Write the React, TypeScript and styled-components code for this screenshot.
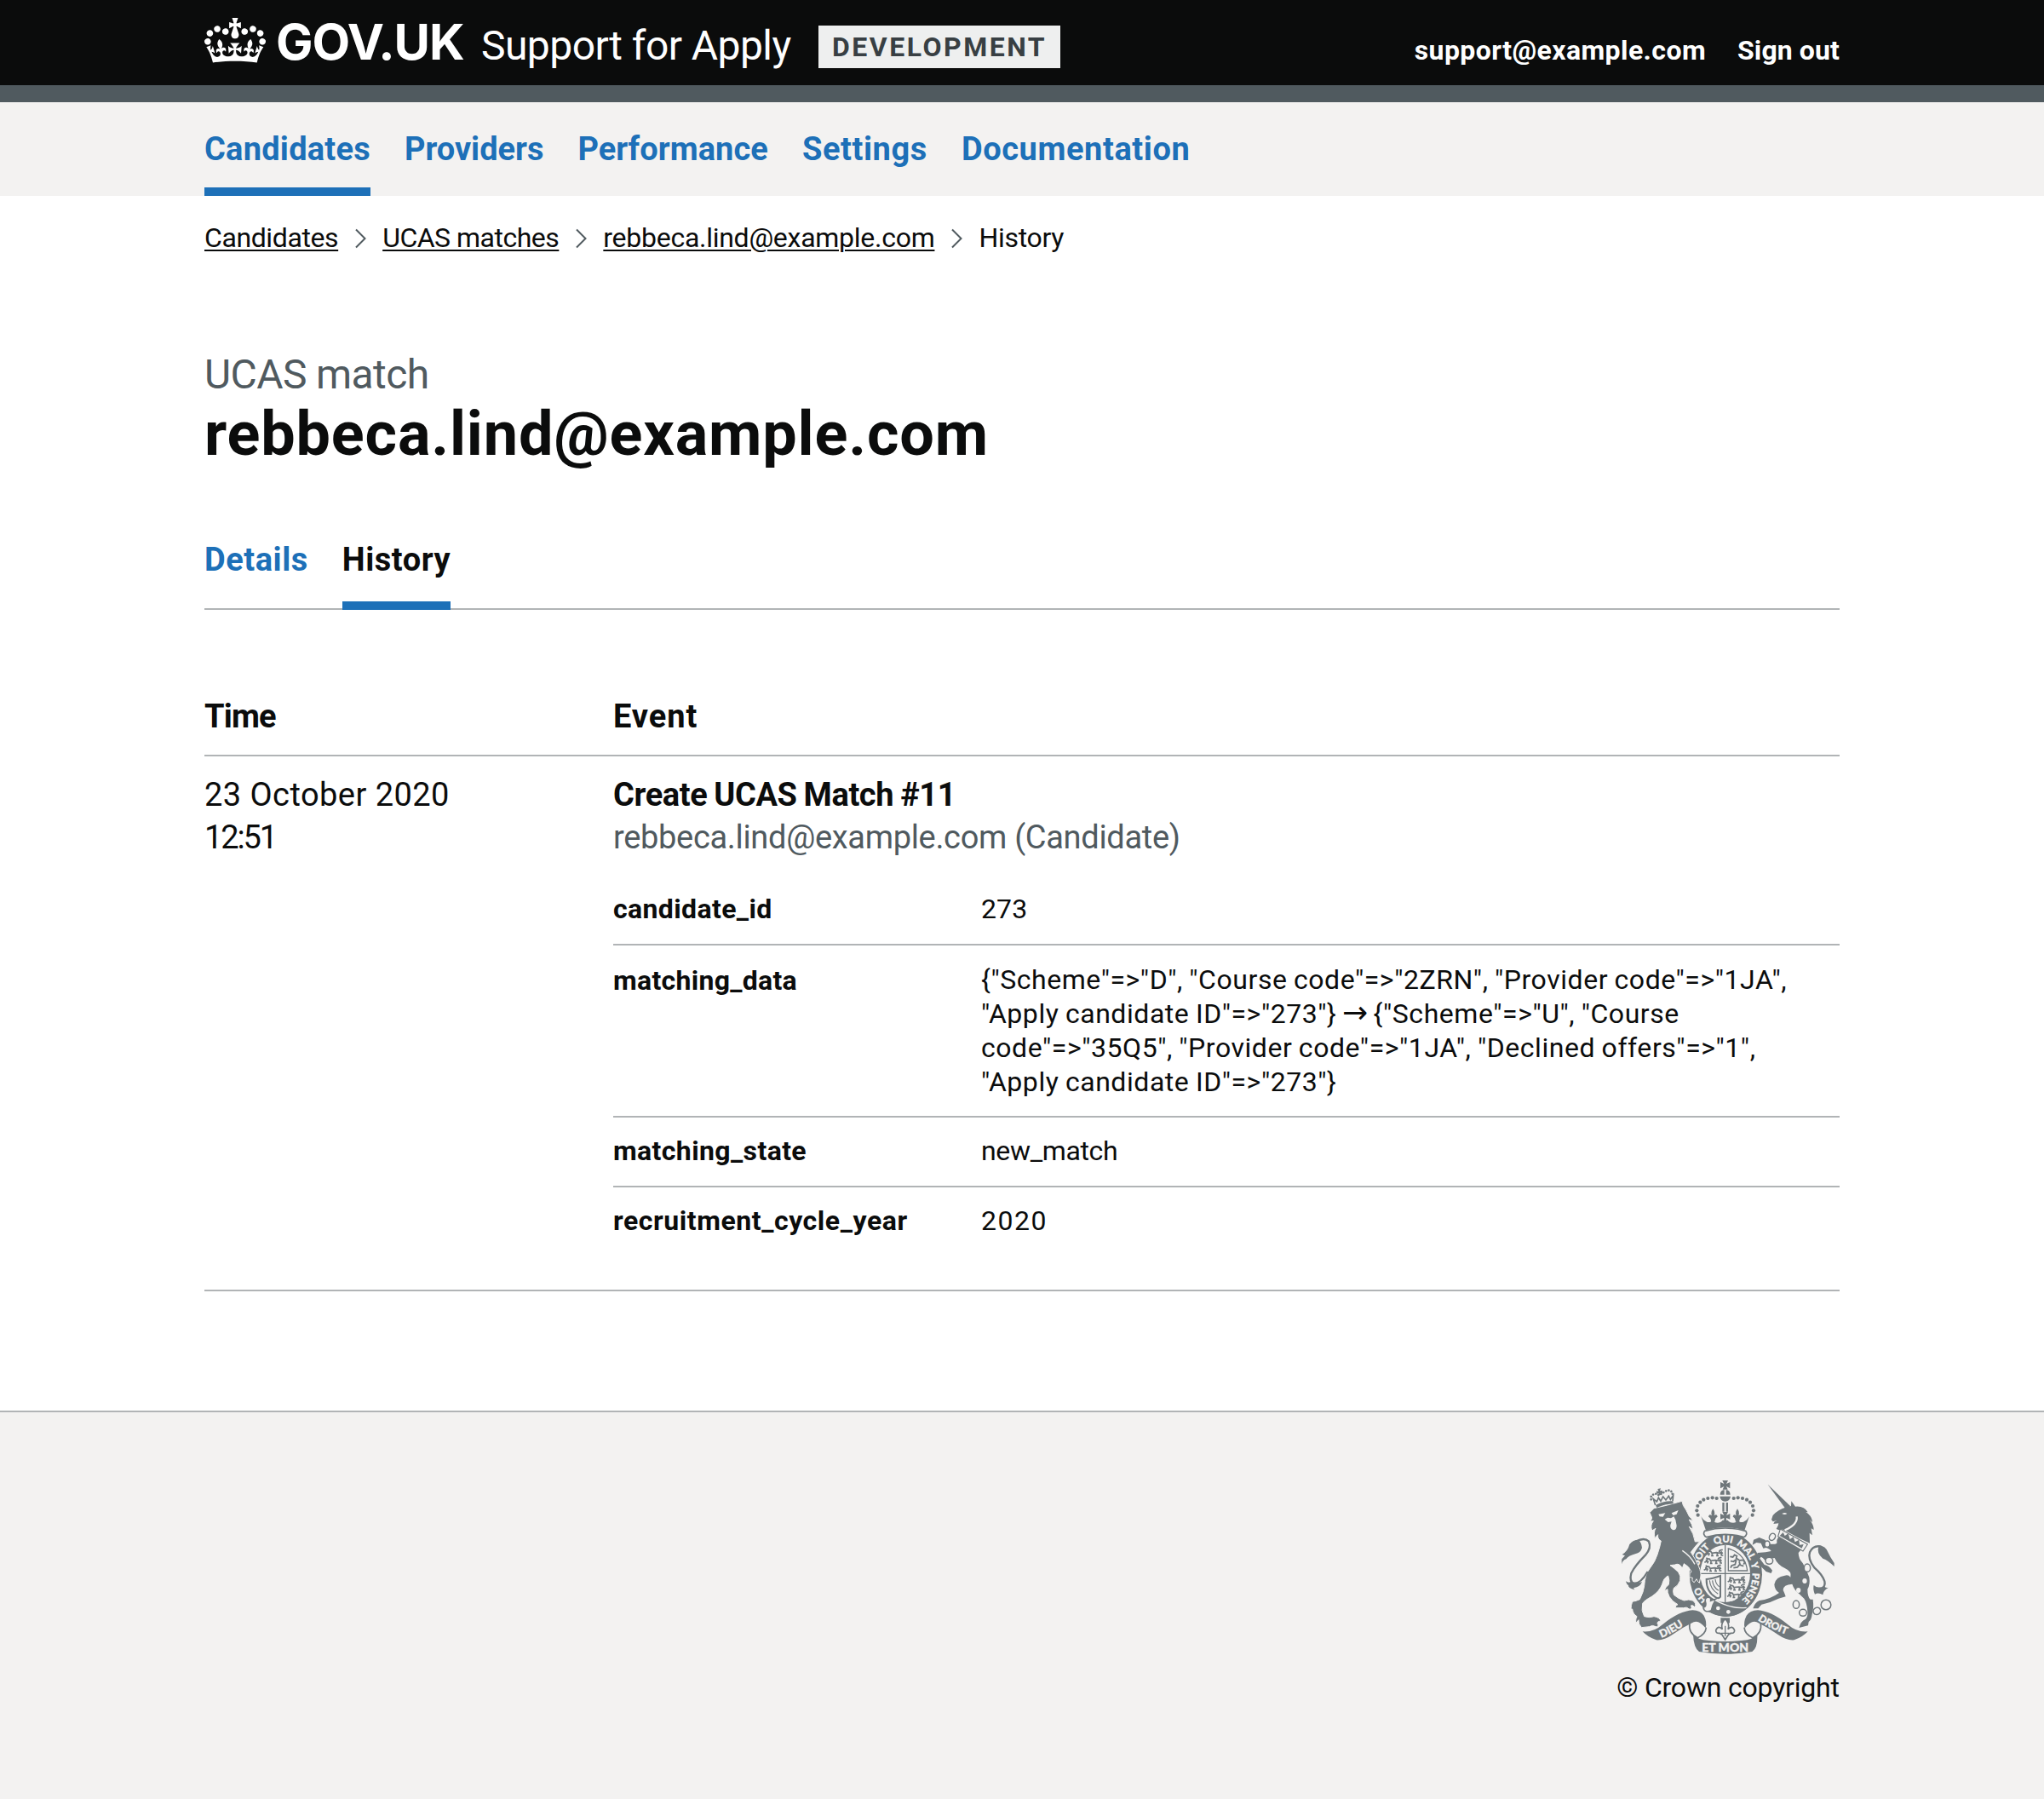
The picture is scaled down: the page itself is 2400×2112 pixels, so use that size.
import React from 'react';
import styled, { createGlobalStyle } from 'styled-components';

const ink = '#0b0c0c';
const secondary = '#505a5f';
const brand = '#1d70b8';
const rule = '#b1b4b6';
const pale = '#f3f2f1';
const crest = '#6f777b';

const GlobalStyle = createGlobalStyle`
  *, *::before, *::after { box-sizing: border-box; }
  body {
    margin: 0;
    background: #fff;
    color: ${ink};
    font-family: Roboto, "Liberation Sans", Arial, sans-serif;
    font-size: 38px;
    line-height: 50px;
  }
`;

interface Tracked {
  $track?: number;
}

const Page = styled.div`
  min-height: 2112px;
  display: flex;
  flex-direction: column;
`;

const Container = styled.div`
  width: 1920px;
  margin: 0 auto;
`;

/* Header */

const Header = styled.header`
  height: 120px;
  background: ${ink};
  border-bottom: 20px solid ${secondary};
`;

const HeaderRow = styled(Container)`
  display: flex;
  align-items: flex-start;
  white-space: nowrap;
`;

const CrownIcon = styled.svg`
  width: 72px;
  height: 53px;
  margin-top: 21px;
  flex: none;
  fill: #fff;
`;

const Logotype = styled.span`
  width: 241px;
  margin-top: 19px;
  padding-left: 12px;
  color: #fff;
  font-family: Inter, sans-serif;
  font-size: 58px;
  font-weight: 700;
  line-height: 60px;
  letter-spacing: -1.1px;
`;

const ServiceName = styled.span`
  width: 408px;
  margin-top: 24px;
  padding-left: 12px;
  color: #fff;
  font-size: 48px;
  line-height: 60px;
  letter-spacing: -0.56px;
`;

const EnvironmentTag = styled.strong`
  margin-top: 30px;
  padding: 0 16px;
  background: #eeefef;
  color: #383f43;
  font-size: 32px;
  font-weight: 700;
  line-height: 50px;
  letter-spacing: 2.5px;
`;

const AccountNav = styled.nav`
  display: flex;
  gap: 37px;
  margin: 39px 0 0 auto;
`;

const AccountLink = styled.a<Tracked>`
  color: #fff;
  font-size: 32px;
  font-weight: 700;
  line-height: 40px;
  letter-spacing: ${(p) => p.$track ?? 0}px;
`;

/* Navigation */

const PrimaryNav = styled.nav`
  height: 110px;
  background: ${pale};
`;

const NavList = styled(Container)`
  display: flex;
  gap: 40px;
`;

const NavLink = styled.a<Tracked & { $current?: boolean }>`
  height: 110px;
  padding-top: 30px;
  border-bottom: 10px solid ${(p) => (p.$current ? brand : 'transparent')};
  color: ${brand};
  font-weight: 700;
  letter-spacing: ${(p) => p.$track ?? 0}px;
`;

const Breadcrumbs = styled.nav`
  display: flex;
  align-items: flex-start;
  margin-top: 29px;
  font-size: 32px;
  line-height: 40px;
`;

const Crumb = styled.a<Tracked & { $link?: boolean }>`
  letter-spacing: ${(p) => p.$track ?? 0}px;
  text-decoration: ${(p) => (p.$link ? 'underline' : 'none')};
  text-decoration-thickness: 2px;
  text-underline-offset: 3px;
`;

const ChevronIcon = styled.svg`
  width: 13px;
  height: 24px;
  margin: 9px 19px 0 20px;
  fill: none;
  stroke: ${secondary};
  stroke-width: 2;
`;

/* Page heading */

const Heading = styled.h1`
  margin: 111px 0 0;
  font-size: 72px;
  font-weight: 700;
  line-height: 80px;
  letter-spacing: 0.82px;
`;

const Caption = styled.span`
  display: block;
  color: ${secondary};
  font-size: 48px;
  font-weight: 400;
  line-height: 60px;
  letter-spacing: -0.6px;
`;

const Tabs = styled.nav`
  display: flex;
  gap: 40px;
  height: 84px;
  margin-top: 82px;
  box-shadow: inset 0 -2px 0 ${rule};
`;

const Tab = styled.a<{ $current?: boolean }>`
  border-bottom: 10px solid ${(p) => (p.$current ? brand : 'transparent')};
  color: ${(p) => (p.$current ? ink : brand)};
  font-weight: 700;
  letter-spacing: 0.54px;
`;

/* Audit table */

const AuditTable = styled.section`
  margin-top: 100px;
`;

const AuditRow = styled.div<{ $head?: boolean }>`
  display: grid;
  grid-template-columns: 480px 1440px;
  padding: ${(p) => (p.$head ? '0 0 20px' : '20px 0 40px')};
  border-bottom: 2px solid ${rule};
`;

const HeadCell = styled.div<Tracked>`
  font-weight: 700;
  letter-spacing: ${(p) => p.$track ?? 0}px;
`;

const TimeLine = styled.div<Tracked>`
  letter-spacing: ${(p) => p.$track ?? 0}px;
`;

const EventTitle = styled.div`
  font-weight: 700;
  letter-spacing: -0.4px;
  word-spacing: -1px;
`;

const EventActor = styled.div`
  color: ${secondary};
  letter-spacing: -0.32px;
`;

const ChangeList = styled.dl`
  margin: 20px 0 0;
  font-size: 32px;
  line-height: 40px;
`;

const Change = styled.div`
  display: grid;
  grid-template-columns: 432px 1008px;
  &:not(:last-child) { border-bottom: 2px solid ${rule}; }
`;

const ChangeKey = styled.dt<Tracked & { $tall?: boolean }>`
  padding-top: ${(p) => (p.$tall ? 21 : 19)}px;
  font-weight: 700;
  letter-spacing: ${(p) => p.$track ?? 0}px;
`;

const ChangeValue = styled.dd<Tracked & { $tall?: boolean }>`
  margin: 0;
  padding: ${(p) => (p.$tall ? '20px 20px 20px 0' : '19px 20px 21px 0')};
  letter-spacing: ${(p) => p.$track ?? 0}px;
  word-spacing: ${(p) => (p.$tall ? -1 : 0)}px;
`;

const Arrow = styled.span`
  display: inline-block;
  font-family: "DejaVu Sans", sans-serif;
  font-size: 36px;
  font-weight: 400;
  line-height: 30px;
  letter-spacing: 0;
  margin: 0 -1px;
`;

/* Footer */

const Footer = styled.footer`
  flex: 1;
  margin-top: 140px;
  padding-top: 80px;
  background: ${pale};
  border-top: 2px solid ${rule};
`;

const FooterInner = styled(Container)`
  display: flex;
  justify-content: flex-end;
`;

const Copyright = styled.a`
  display: flex;
  flex-direction: column;
  align-items: center;
  width: 262px;
  font-size: 32px;
  line-height: 40px;
  letter-spacing: -0.2px;
  white-space: nowrap;
`;

const ArmsIcon = styled.svg`
  width: 250px;
  height: 204px;
  margin-bottom: 19px;
`;

const Motto = styled.text<{ $size: number }>`
  fill: ${pale};
  stroke: ${pale};
  stroke-width: 1;
  font-family: Lato, sans-serif;
  font-size: ${(p) => p.$size}px;
  font-weight: 900;
  letter-spacing: 0;
`;

const Crown = () => (
  <CrownIcon viewBox="0 0 132 97" preserveAspectRatio="none" aria-hidden="true">
    <path d="M25 30.2c3.5 1.5 7.7-.2 9.1-3.7 1.5-3.6-.2-7.8-3.9-9.2-3.6-1.4-7.6.3-9.1 3.9-1.4 3.5.3 7.5 3.9 9zM9 39.5c3.6 1.5 7.8-.2 9.2-3.7 1.5-3.6-.2-7.8-3.9-9.1-3.6-1.5-7.6.2-9.1 3.8-1.4 3.5.3 7.5 3.8 9zM4.4 57.2c3.5 1.5 7.7-.2 9.1-3.8 1.5-3.6-.2-7.7-3.9-9.1-3.5-1.5-7.6.3-9.1 3.8-1.4 3.5.3 7.6 3.9 9.1zm38.3-21.4c3.5 1.5 7.7-.2 9.1-3.8 1.5-3.6-.2-7.7-3.9-9.1-3.6-1.5-7.6.3-9.1 3.8-1.3 3.6.4 7.7 3.9 9.1zm64.4-5.6c-3.6 1.5-7.8-.2-9.1-3.7-1.5-3.6.2-7.8 3.8-9.2 3.6-1.4 7.7.3 9.2 3.9 1.3 3.5-.4 7.5-3.9 9zm15.9 9.3c-3.6 1.5-7.7-.2-9.1-3.7-1.5-3.6.2-7.8 3.7-9.1 3.6-1.5 7.7.2 9.2 3.8 1.5 3.5-.3 7.5-3.8 9zm4.7 17.7c-3.6 1.5-7.8-.2-9.2-3.8-1.5-3.6.2-7.7 3.9-9.1 3.6-1.5 7.7.3 9.2 3.8 1.3 3.5-.4 7.6-3.9 9.1zM89.3 35.8c-3.6 1.5-7.8-.2-9.2-3.8-1.4-3.6.2-7.7 3.9-9.1 3.6-1.5 7.7.3 9.2 3.8 1.4 3.6-.3 7.7-3.9 9.1zM69.7 17.7l8.9 4.7V9.3l-8.9 2.8c-.2-.3-.5-.6-.9-.9L72.4 0H59.6l3.5 11.2c-.3.3-.6.5-.9.9l-8.8-2.8v13.1l8.8-4.7c.3.3.6.7.9.9l-5 15.4v.1c-.2.8-.4 1.6-.4 2.4 0 4.1 3.1 7.5 7 8.1h.2c.3 0 .7.1 1 .1.4 0 .7 0 1-.1h.2c4-.6 7.1-4.1 7.1-8.1 0-.8-.1-1.7-.4-2.4V34l-5.1-15.4c.4-.2.7-.6 1-.9zM66 92.8c16.9 0 32.8 1.1 47.1 3.2 4-16.9 8.9-26.7 14-33.5l-9.6-3.4c1 4.9 1.1 7.2 0 10.2-1.5-1.4-3-4.3-4.2-8.7L108.6 76c2.8-2 5-3.2 7.5-3.3-4.4 9.4-10 11.9-13.6 11.2-4.3-.8-6.3-4.6-5.6-7.9 1-4.7 5.7-5.9 8-.5 4.3-8.7-3-11.4-7.6-8.8 7.1-7.2 7.9-13.5 2.1-21.1-8 6.1-8.1 12.3-4.5 20.8-4.7-5.4-12.1-2.5-9.5 6.2 3.4-5.2 7.9-2 7.2 3.1-.6 4.3-6.4 7.8-13.5 7.2-10.3-.9-10.9-8-11.2-13.8 2.5-.5 7.1 1.8 11 7.3L80.2 60c-4.1 4.4-8 5.3-12.3 5.4 1.4-4.4 8-11.6 8-11.6H55.5s6.4 7.2 7.9 11.6c-4.2-.1-8-1-12.3-5.4l1.4 16.4c3.9-5.5 8.5-7.7 10.9-7.3-.3 5.8-.9 12.8-11.1 13.8-7.2.6-12.9-2.9-13.5-7.2-.7-5 3.8-8.3 7.1-3.1 2.7-8.7-4.6-11.6-9.4-6.2 3.7-8.5 3.6-14.7-4.6-20.8-5.8 7.6-5 13.9 2.2 21.1-4.7-2.6-11.9.1-7.7 8.8 2.3-5.5 7.1-4.2 8.1.5.7 3.3-1.3 7.1-5.7 7.9-3.5.7-9-1.8-13.5-11.2 2.5.1 4.7 1.3 7.5 3.3l-4.7-15.4c-1.2 4.4-2.7 7.2-4.3 8.7-1.1-3-.9-5.3 0-10.2l-9.5 3.4c5 6.9 9.9 16.7 14 33.5 14.8-2.1 30.8-3.2 47.7-3.2z" />
  </CrownIcon>
);

const Chevron = () => (
  <ChevronIcon viewBox="0 0 13 24" aria-hidden="true">
    <path d="M1 1.5 11.5 12 1 22.5" />
  </ChevronIcon>
);

const pearls: [number, number][] = [
  [341, 416], [337, 400], [340, 384], [349, 371], [361, 362], [376, 357], [392, 355], [407, 357],
];

const PassantLion = ({ x, y }: { x: number; y: number }) => (
  <path
    transform={`translate(${x} ${y})`}
    fill="none"
    stroke={crest}
    strokeWidth="5"
    d="M0 20l8-4 2-10 8 2 4 6 16-2 10 2 8-4 4 6M6 4l8 4M4 12l6 0M14 14l-4 9M24 14l-2 9 6 0M42 12l-2 11 6 0M54 12l2 10 6 0M48 10c0-8 8-6 12-8"
  />
);

const garterWords = [
  { word: 'HO', offset: 94 },
  { word: 'SOIT', offset: 233 },
  { word: 'QUI', offset: 322 },
  { word: 'MAL', offset: 405 },
  { word: 'Y', offset: 463 },
  { word: 'PENSE', offset: 541 },
];

const Arms = () => (
  <ArmsIcon viewBox="72 294 750 612" aria-hidden="true">
    <defs>
      <path id="garter" d="M437 738A96 113 0 0 1 341 625A96 113 0 0 1 437 512A96 113 0 0 1 533 625A96 113 0 0 1 437 738" />
      <path id="dieu" d="M212 849Q268 826 326 780" />
      <path id="droit" d="M552 786Q606 824 690 849" />
    </defs>

    {/* Garter and shield */}
    <ellipse cx="439" cy="625" rx="128" ry="148" fill={crest} />
    <ellipse cx="437" cy="622" rx="88" ry="101" fill={pale} />
    {garterWords.map((g) => (
      <Motto key={g.word} $size={34} textAnchor="middle">
        <textPath href="#garter" startOffset={g.offset}>{g.word}</textPath>
      </Motto>
    ))}
    <path d="M437 521V723M349 622H525" stroke={crest} strokeWidth="4" />
    <PassantLion x={368} y={536} />
    <PassantLion x={364} y={563} />
    <PassantLion x={362} y={590} />
    <PassantLion x={446} y={631} />
    <PassantLion x={446} y={657} />
    <PassantLion x={444} y={683} />
    <path d="M448 534Q508 552 515 612H448Z" fill="none" stroke={crest} strokeWidth="4" />
    <path
      d="M454 562l10 2 6-8 8 4-2 8 12 8 12-2M476 572l-10 8-10-2M486 580l4 12 12 4M476 574l-4 16-12 4-4 8M488 590l-8 10-14 2M500 574l6 8-4 8"
      fill="none" stroke={crest} strokeWidth="5.5"
    />
    <path d="M371 642Q392 640 420 630L420 704Q414 712 404 706Q370 686 371 642Z" fill="none" stroke={crest} strokeWidth="6" />
    <path d="M382 646Q384 676 412 694M392 646Q394 670 414 682M402 642Q404 660 416 668" fill="none" stroke={crest} strokeWidth="3.5" />

    {/* Buckle and strap */}
    <path d="M366 712Q382 700 398 716L510 748Q470 778 430 773Q390 766 364 748Z" fill={crest} />
    <path d="M372 706Q388 702 386 718L404 712Q392 732 388 752Q364 762 360 742Q372 738 368 724Q364 712 372 706Z" fill={pale} stroke={crest} strokeWidth="5" />
    <path d="M402 716Q460 748 512 742" fill="none" stroke={pale} strokeWidth="4" />
    <circle cx="412" cy="744" r="7" fill={pale} />
    <circle cx="448" cy="757" r="7" fill={pale} />
    <path d="M421 778H453V796H421Z" fill={crest} />
    <path
      d="M437 782Q454 798 447 818Q462 802 470 822Q470 834 456 832Q452 836 449 836Q445 842 437 855Q429 842 425 836Q422 836 418 832Q404 834 404 822Q412 802 427 818Q420 798 437 782Z"
      fill={pale} stroke={crest} strokeWidth="5"
    />
    <path d="M437 806V842M422 832H452" stroke={crest} strokeWidth="4" />

    {/* Imperial crown */}
    <path d="M365 472Q437 452 509 472Q518 484 503 494Q437 474 371 494Q356 484 365 472Z" fill={pale} stroke={crest} strokeWidth="5" />
    <path d="M352 420C366 444 384 446 392 434C400 446 420 446 428 434L446 434C454 446 476 446 482 434C490 446 508 444 522 420L505 470Q437 450 369 470Z" fill={crest} />
    {[394, 480].map((x) => (
      <path key={x} transform={`translate(${x} 0)`} fill={crest} d="M0 394Q9 406 4 418Q14 410 16 422Q8 424 6 440H-6Q-8 424-16 422Q-14 410-4 418Q-9 406 0 394Z" />
    ))}
    <path d="M427 405H447L441 417L454 411V431L441 426V440H433V426L420 431V411L433 417Z" fill={crest} />
    <path d="M427 372h7v32h-7zM440 372h7v32h-7z" fill={crest} />
    <path d="M419 344Q420 328 434 327V344ZM455 344Q454 328 440 327V344ZM418 350H456Q454 367 437 368Q420 367 418 350Z" fill={crest} />
    <path d="M427 294H447L441 306L454 300V322L441 315L446 326H428L433 315L420 322V300L433 306Z" fill={crest} />
    {pearls.map(([x, y]) => (
      <g key={`${x}-${y}`} fill={crest}>
        <circle cx={x} cy={y} r="6.3" />
        <circle cx={874 - x} cy={y} r="6.3" />
      </g>
    ))}

    {/* Lion */}
    <g transform="translate(60 285)">
      <path
        fill={crest}
        stroke={pale}
        strokeWidth="3"
        d="M111 122L126 107Q170 98 225 82L229 97Q240 112 250 135Q258 142 263 152L250 147Q262 165 264 182L250 172Q266 195 271 225L287 224Q270 242 256 262Q272 285 283 310Q294 335 290 350L286 370Q278 364 276 356L268 368Q258 364 262 352L251 350Q250 335 258 330Q250 312 232 302L226 318Q215 298 200 306L183 308Q198 318 212 332Q222 345 218 362Q212 380 196 388Q192 398 196 412Q212 426 232 432Q250 426 262 432Q276 440 271 456Q262 446 256 450Q262 460 252 463Q240 452 230 458L202 458Q200 450 210 446Q190 436 180 418Q172 402 174 392L162 398Q166 384 178 376Q182 360 176 345Q160 352 155 375Q145 400 118 418Q92 432 86 442Q80 468 92 488Q110 494 126 488Q146 490 151 506Q140 502 138 512Q146 520 136 525Q120 516 110 524L82 527Q70 514 72 500L61 512Q62 494 66 488Q52 480 50 462L45 462Q46 430 60 434L76 428Q90 400 92 380Q94 340 112 318Q130 296 138 270Q148 240 151 222Q137 215 140 200L129 212Q124 190 132 178L119 186Q112 165 124 152L113 153Q121 142 118 138Z"
      />
      <path d="M142 128L166 124L158 137L146 136ZM188 124L212 114L206 128L194 132ZM164 146L174 140L186 142L196 136L202 148L206 168Q206 184 194 184Q182 180 184 166L188 154L176 156Z" fill={pale} />
      <path d="M226 256Q256 276 270 304" fill="none" stroke={pale} strokeWidth="4" />
      <path d="M62 224Q92 208 108 224Q118 246 96 272Q60 308 46 336Q38 366 56 372Q80 372 104 330" fill="none" stroke={crest} strokeWidth="7" />
      <path d="M12 304L13 286L24 274L14 270Q34 258 40 234Q52 218 72 218Q82 228 84 246Q80 264 60 268Q36 274 28 286Q16 290 12 304ZM27 364Q38 372 48 364Q62 374 84 366Q78 384 54 388L58 394Q34 388 36 378Q30 376 27 364Z" fill={crest} />
      <path d="M132 96Q160 80 192 82L195 91Q166 92 136 105Z" fill={crest} />
      <path d="M131 96L124 74L136 84L142 70L150 82L158 66L168 78L178 64L184 76L194 62L192 82" fill="none" stroke={crest} strokeWidth="5" />
      <path d="M116 76L116 66L124 58L134 56L142 60L152 56L162 50L172 44L182 44L190 50L192 62" fill="none" stroke={crest} strokeWidth="8" strokeLinecap="round" strokeDasharray="0.1 10" />
      <path d="M139 39L150 37L147 46L155 44L157 54L148 53L151 60L143 61L144 54L136 56L135 46L142 48Z" fill={crest} />
    </g>

    {/* Unicorn */}
    <g transform="translate(435 285)">
      <path d="M152 23L232 100L214 108Z" fill={crest} />
      <path
        fill={crest}
        d="M165 147L170 132Q188 112 218 103L234 99L235 82L249 101Q280 98 293 121L286 120Q308 134 309 156L300 148Q314 166 314 183L305 178L309 202L299 194L300 230L290 226L262 212L214 186Q200 178 192 184L182 180Q190 168 190 160L172 162L176 154L184 150L170 154Z"
      />
      <path d="M202 126Q212 120 220 126Q212 132 202 126Z" fill={pale} />
      <path d="M254 136Q258 164 212 184" fill="none" stroke={pale} strokeWidth="7" />
      <path
        fill={crest}
        d="M190 208L270 252L260 264Q260 285 275 300Q290 325 298 350Q302 375 292 392Q292 420 302 428L311 428Q315 460 308 480Q306 500 296 507L294 520L262 528Q268 505 284 498Q294 490 292 470Q290 440 280 425L262 408Q245 395 238 374Q206 376 206 395Q212 408 215 418L190 425Q160 440 130 446L118 460L100 460Q106 440 122 432Q160 428 192 405Q176 395 175 375Q180 348 212 344Q225 340 232 350Q238 330 212 318Q186 306 176 282Q160 284 142 290Q134 280 128 278L124 284L140 306Q156 308 168 326L164 336L146 330L128 312L110 284L116 264L144 262L164 258Q160 250 146 246L136 248L128 230L112 228L98 236L102 218L122 210L142 218L152 232Q176 236 184 230Q182 218 190 208Z"
      />
      <path d="M196 180L292 234L276 258L188 206Z" fill={pale} stroke={crest} strokeWidth="3.5" />
      <path d="M194 204L206 192L212 204L224 196L230 216L242 208L248 226L262 218L264 236L278 234L272 248Z" fill={crest} />
      <path d="M318 400Q358 392 352 364Q344 340 316 316Q292 284 300 262Q312 236 340 242" fill="none" stroke={crest} strokeWidth="7" />
      <path d="M332 238Q356 240 364 262Q372 280 386 300L386 312Q364 290 346 284Q322 266 332 238ZM366 386Q348 396 346 412Q330 402 318 410Q310 392 314 378Q330 392 350 380Q356 390 366 386Z" fill={crest} />
      <g fill="none" stroke={crest} strokeWidth="4.5">
        <ellipse cx="168" cy="208" rx="10" ry="13" transform="rotate(30 168 208)" />
        <ellipse cx="150" cy="233" rx="9" ry="11" fill={pale} />
        <ellipse cx="157" cy="292" rx="13" ry="12" fill={pale} />
        <ellipse cx="291" cy="317" rx="11" ry="14" fill={pale} />
        <ellipse cx="252" cy="446" rx="11" ry="14" />
        <ellipse cx="276" cy="475" rx="13" ry="12" />
        <ellipse cx="325" cy="469" rx="13" ry="12" transform="rotate(-30 325 469)" />
        <circle cx="357" cy="447" r="17.5" />
      </g>
      <ellipse cx="282" cy="363" rx="8" ry="9" fill={pale} />
      <ellipse cx="260" cy="396" rx="8" ry="9" fill={pale} />
    </g>

    {/* Scroll */}
    {[undefined, 'translate(874 0) scale(-1 1)'].map((t, i) => (
      <g key={i} transform={t}>
        <path d="M312 797Q306 832 340 848Q368 836 370 812" fill={pale} stroke={crest} strokeWidth="5" />
        <path d="M146 826Q184 830 218 800Q276 754 322 751Q350 752 362 770Q374 794 368 814Q344 784 326 793Q286 812 250 838Q222 858 194 856Q164 846 146 826Z" fill={crest} />
      </g>
    ))}
    <path d="M324 836Q336 854 380 858Q437 864 494 858Q538 854 550 836Q552 884 532 897Q437 914 345 897Q326 884 324 836Z" fill={crest} />
    <Motto $size={38}>
      <textPath href="#dieu">DIEU</textPath>
    </Motto>
    <Motto $size={36}>
      <textPath href="#droit">DROIT</textPath>
    </Motto>
    <Motto $size={42} x="437" y="896" textAnchor="middle">ET MON</Motto>
  </ArmsIcon>
);

const navItems = [
  { label: 'Candidates', track: 0.24, current: true },
  { label: 'Providers', track: -0.03 },
  { label: 'Performance', track: 0.06 },
  { label: 'Settings', track: 0.6 },
  { label: 'Documentation', track: 0.58 },
];

const crumbs = [
  { label: 'Candidates', track: -0.4 },
  { label: 'UCAS matches', track: -0.5 },
  { label: 'rebbeca.lind@example.com', track: -0.27 },
];

const changes: {
  name: string;
  nameTrack: number;
  value: React.ReactNode;
  track: number;
  tall?: boolean;
}[] = [
  { name: 'candidate_id', nameTrack: 0.37, value: '273', track: 0.1 },
  {
    name: 'matching_data',
    nameTrack: 0.28,
    value: (
      <>
        {'{"Scheme"=>"D", "Course code"=>"2ZRN", "Provider code"=>"1JA", "Apply candidate ID"=>"273"} '}
        <Arrow>→</Arrow>
        {' {"Scheme"=>"U", "Course code"=>"35Q5", "Provider code"=>"1JA", "Declined offers"=>"1", "Apply candidate ID"=>"273"}'}
      </>
    ),
    track: 0.55,
    tall: true,
  },
  { name: 'matching_state', nameTrack: 0.38, value: 'new_match', track: -0.35 },
  { name: 'recruitment_cycle_year', nameTrack: 0.55, value: '2020', track: 1.5 },
];

export default function App() {
  return (
    <Page>
      <GlobalStyle />
      <Header>
        <HeaderRow>
          <Crown />
          <Logotype>GOV.UK</Logotype>
          <ServiceName>Support for Apply</ServiceName>
          <EnvironmentTag>DEVELOPMENT</EnvironmentTag>
          <AccountNav>
            <AccountLink $track={0.42}>support@example.com</AccountLink>
            <AccountLink $track={0.1}>Sign out</AccountLink>
          </AccountNav>
        </HeaderRow>
      </Header>

      <PrimaryNav>
        <NavList>
          {navItems.map((n) => (
            <NavLink key={n.label} $track={n.track} $current={n.current}>
              {n.label}
            </NavLink>
          ))}
        </NavList>
      </PrimaryNav>

      <Container>
        <Breadcrumbs>
          {crumbs.map((c) => (
            <React.Fragment key={c.label}>
              <Crumb $link $track={c.track}>{c.label}</Crumb>
              <Chevron />
            </React.Fragment>
          ))}
          <Crumb $track={-0.3}>History</Crumb>
        </Breadcrumbs>

        <Heading>
          <Caption>UCAS match</Caption>
          rebbeca.lind@example.com
        </Heading>

        <Tabs>
          <Tab>Details</Tab>
          <Tab $current>History</Tab>
        </Tabs>

        <AuditTable>
          <AuditRow $head>
            <HeadCell $track={-0.8}>Time</HeadCell>
            <HeadCell $track={0.95}>Event</HeadCell>
          </AuditRow>
          <AuditRow>
            <div>
              <TimeLine $track={0.45}>23 October 2020</TimeLine>
              <TimeLine $track={-2.1}>12:51</TimeLine>
            </div>
            <div>
              <EventTitle>Create UCAS Match #11</EventTitle>
              <EventActor>rebbeca.lind@example.com (Candidate)</EventActor>
              <ChangeList>
                {changes.map((c) => (
                  <Change key={c.name}>
                    <ChangeKey $track={c.nameTrack} $tall={c.tall}>{c.name}</ChangeKey>
                    <ChangeValue $track={c.track} $tall={c.tall}>{c.value}</ChangeValue>
                  </Change>
                ))}
              </ChangeList>
            </div>
          </AuditRow>
        </AuditTable>
      </Container>

      <Footer>
        <FooterInner>
          <Copyright>
            <Arms />
            © Crown copyright
          </Copyright>
        </FooterInner>
      </Footer>
    </Page>
  );
}
